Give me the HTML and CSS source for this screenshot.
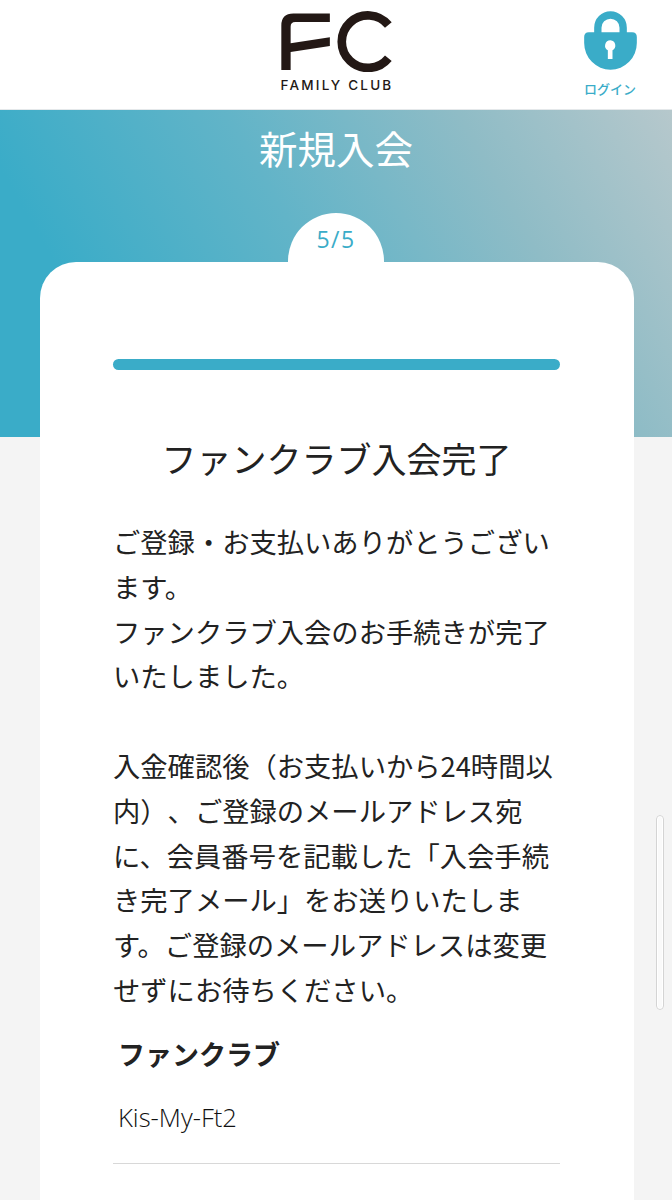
FILE: index.html
```html
<!DOCTYPE html>
<html lang="ja">
<head>
    <meta charset="UTF-8">
    <meta name="viewport" content="width=device-width, initial-scale=1.0">
    <title>新規入会 - FAMILY CLUB</title>
    <link rel="stylesheet" href="styles.css">
</head>
<body>
    <header class="site-header">
        <a class="logo" href="#">
            <svg class="logo-mark" viewBox="60 30 340 186" aria-hidden="true">
                <path d="M210 40V66H106Q92 66 92 80V130L210 112V138L92 156V210H64V76Q64 40 100 40Z" fill="#231815"/>
                <path d="M386 75A79 79 0 1 0 386 175" fill="none" stroke="#231815" stroke-width="26"/>
            </svg>
            <span class="logo-text">FAMILY CLUB</span>
        </a>
        <a class="login" href="#">
            <svg class="login-icon" viewBox="36 34 170 180" aria-hidden="true">
                <path d="M83 104V84a38 38 0 0 1 76 0V104" fill="none" stroke="#3aacc8" stroke-width="22"/>
                <path fill-rule="evenodd" fill="#3aacc8" d="M56 98H186Q200 98 200 112V130A79 80 0 0 1 42 130V112Q42 98 56 98ZM121 122a16 16 0 0 0-8 30L113 178H127L127 152a16 16 0 0 0-6-30Z"/>
            </svg>
            <span class="login-label">ログイン</span>
        </a>
    </header>

    <section class="hero">
        <h1 class="hero-title">新規入会</h1>
    </section>

    <main class="card">
        <div class="step-badge">5/5</div>
        <div class="progress"></div>
        <h2 class="card-title">ファンクラブ入会完了</h2>
        <p class="message">ご登録・お支払いありがとうございます。<br>ファンクラブ入会のお手続きが完了いたしました。<br><br>入金確認後（お支払いから24時間以内）、ご登録のメールアドレス宛に、会員番号を記載した「入会手続き完了メール」をお送りいたします。ご登録のメールアドレスは変更せずにお待ちください。</p>
        <h3 class="info-label">ファンクラブ</h3>
        <p class="info-value">Kis-My-Ft2</p>
    </main>

    <div class="scroll-thumb"></div>
</body>
</html>
```

FILE: styles.css
```css
html, body {
    margin: 0;
    height: 1200px;
    overflow: hidden;
}
body {
    position: relative;
    background-color: #f4f4f4;
    color: #222;
    font-family: "Noto Sans CJK JP", "Noto Sans", sans-serif;
    text-spacing-trim: space-all;
}
a {
    color: inherit;
    text-decoration: none;
}

.site-header {
    position: relative;
    display: flex;
    justify-content: center;
    height: 109px;
    background-color: #fff;
    border-bottom: 1px solid #e4e8ea;
}
.logo {
    display: flex;
    flex-direction: column;
    align-items: center;
    padding-top: 10px;
}
.logo-mark {
    display: block;
    width: 113px;
    height: 62px;
}
.logo-text {
    margin-top: 6px;
    font-family: "Inter", sans-serif;
    font-size: 13.5px;
    line-height: 15px;
    letter-spacing: 2.2px;
    margin-right: -2px;
    font-weight: 500;
    color: #231815;
    white-space: nowrap;
}
.login {
    position: absolute;
    top: 11px;
    right: 34px;
    display: flex;
    flex-direction: column;
    align-items: center;
    width: 56px;
}
.login-icon {
    display: block;
    width: 57px;
    height: 60px;
}
.login-label {
    margin-top: 8px;
    font-size: 13px;
    line-height: 19px;
    font-weight: 500;
    color: #3aacc8;
    white-space: nowrap;
}

.hero {
    height: 327px;
    background: linear-gradient(60deg, #3aacc8 18%, #62b4c8 48%, #8fbcc6 75%, #b6c8cc 100%);
}
.hero-title {
    margin: 0;
    padding-top: 9px;
    text-align: center;
    font-size: 38.5px;
    line-height: 56px;
    font-weight: 400;
    color: #fff;
}

.card {
    position: relative;
    margin: -175px 38px 0 40px;
    padding: 97px 74px 0 73px;
    min-height: 1000px;
    background-color: #fff;
    border-radius: 36px 36px 0 0;
}
.step-badge {
    position: absolute;
    top: -49px;
    left: 248px;
    width: 96px;
    height: 60px;
    padding-top: 10px;
    box-sizing: border-box;
    border-radius: 48px 48px 0 0 / 48px 48px 0 0;
    background-color: #fff;
    text-align: center;
    font-family: "Open Sans", sans-serif;
    font-size: 23px;
    line-height: 32px;
    letter-spacing: 1.5px;
    color: #3aacc8;
}
.progress {
    height: 11px;
    border-radius: 6px;
    background-color: #3aacc8;
}
.card-title {
    margin: 63px 0 0;
    text-align: center;
    font-size: 35px;
    line-height: 50px;
    font-weight: 400;
    white-space: nowrap;
}
.message {
    margin: 36px 0 0;
    font-size: 27.3px;
    line-height: 44.8px;
}
.info-label {
    margin: 20px 0 0 5px;
    font-size: 27px;
    line-height: 44px;
    font-weight: 700;
}
.info-value {
    margin: 20px 0 0;
    padding: 0 0 23px 5px;
    border-bottom: 1px solid #d8d8d8;
    font-family: "Open Sans", sans-serif;
    font-size: 25.6px;
    line-height: 44px;
    font-weight: 300;
    color: #111;
}

.scroll-thumb {
    position: absolute;
    top: 815px;
    left: 656px;
    width: 8px;
    height: 195px;
    box-sizing: border-box;
    border: 2px solid #fff;
    border-radius: 4px;
    outline: 1px solid #d4d4d4;
    outline-offset: -1px;
    background-color: #fafafa;
}
```
